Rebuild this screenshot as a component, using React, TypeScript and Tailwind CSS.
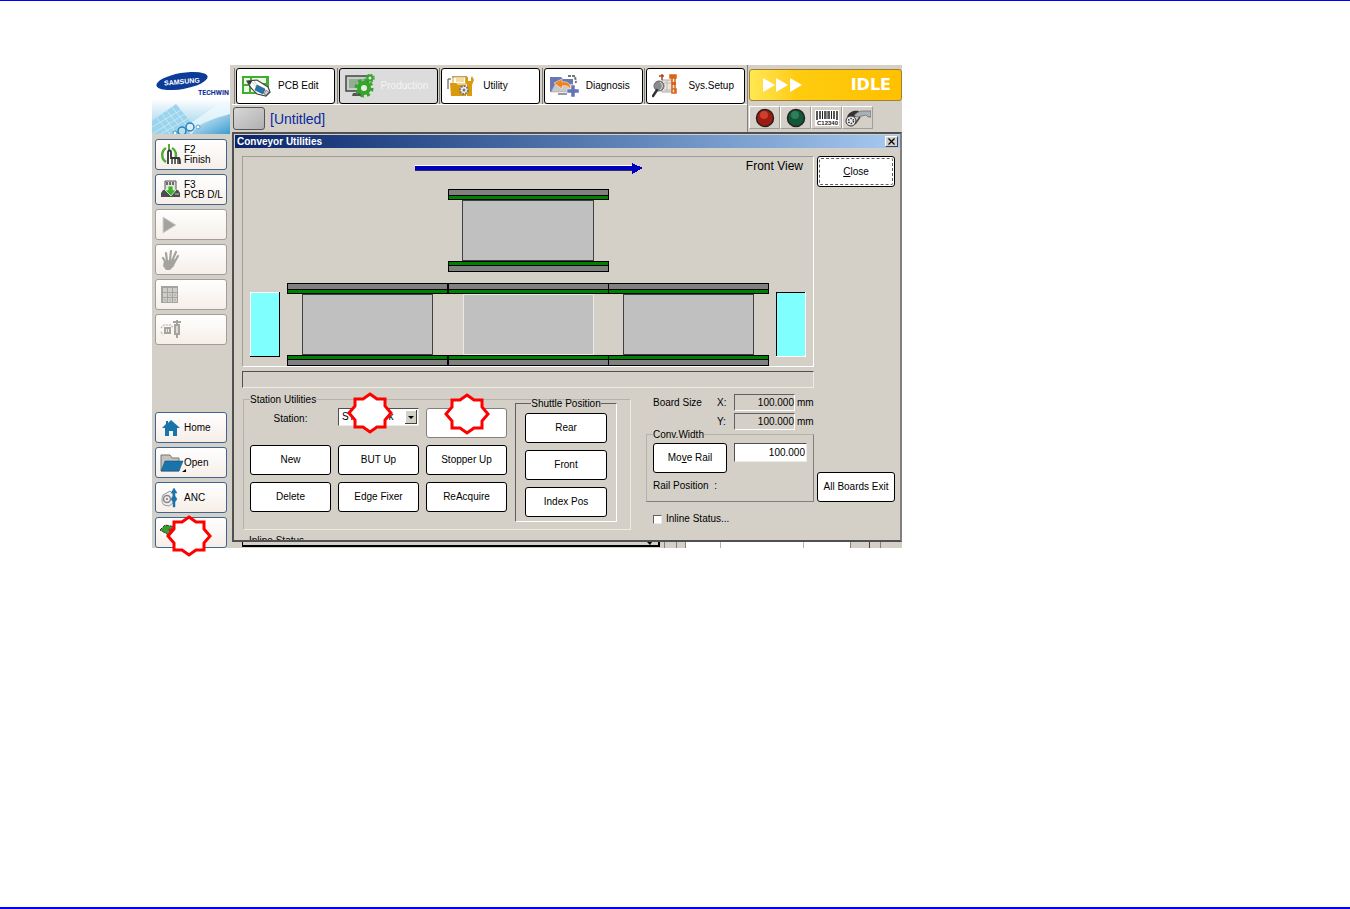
import React, { useState } from "react";

const navItems = [
  { label: "PCB Edit", icon: <PcbEditIcon />, active: false },
  { label: "Production", icon: <ProductionIcon />, active: true },
  { label: "Utility", icon: <UtilityIcon />, active: false },
  { label: "Diagnosis", icon: <DiagnosisIcon />, active: false },
  { label: "Sys.Setup", icon: <SetupIcon />, active: false },
];

function PcbEditIcon() {
  return (
    <svg width="30" height="24" viewBox="0 0 30 24">
      <rect x="0" y="2" width="27" height="18" fill="#43ad30" />
      <path d="M2 4h6v6H2zM10 4h14v5H10zM2 12h5v6H2zM22 11h3v7h-3zM9 15h6v3H9z" fill="#eef8e8" />
      <path d="M5 7l10-1 11 7 2 5-4 4-9-2-6-6z" fill="#fff" stroke="#444" strokeWidth="1.2" />
      <path d="M5 7l5 0-2 4z" fill="#333" />
      <path d="M10 8l4 5M12 7l3 4" stroke="#bbb" strokeWidth="0.8" />
      <path d="M15 11l8 4-2 5-8-4z" fill="#2474a8" stroke="#184c70" strokeWidth="0.6" />
      <path d="M24 16l3 2-3 3-2-1z" fill="#c8d0d4" stroke="#555" strokeWidth="0.6" />
    </svg>
  );
}

function ProductionIcon() {
  return (
    <svg width="30" height="24" viewBox="0 0 30 24">
      <path d="M1 2h22v15H1z" fill="#c8ccc6" stroke="#444" strokeWidth="1.5" />
      <path d="M4 5h16v9H4z" fill="#8fae94" />
      <path d="M8 19h9v3H7z" fill="#555" />
      <circle cx="19" cy="14" r="8" fill="none" stroke="#35a42c" strokeWidth="3" strokeDasharray="3.2 3.1" />
      <circle cx="19" cy="14" r="5" fill="#e6eee4" stroke="#35a42c" strokeWidth="4" />
      <circle cx="25" cy="4" r="4" fill="none" stroke="#35a42c" strokeWidth="1.5" strokeDasharray="1.6 1.6" />
      <circle cx="25" cy="4" r="2.5" fill="#e6eee4" stroke="#35a42c" strokeWidth="2" />
    </svg>
  );
}

function UtilityIcon() {
  return (
    <svg width="28" height="22" viewBox="0 0 28 22">
      <path d="M1 14V4h3M5 2h15v4" fill="none" stroke="#444" strokeWidth="1" />
      <path d="M6 2h13v7H6z" fill="#fff" stroke="#e0a020" />
      <path d="M9 4h8M9 6h8" stroke="#e8b850" />
      <path d="M3 8h6l2 2h8v11H4z" fill="#d99a0c" />
      <path d="M19 1l2 3v2h3V3l1-2 2 4-2 5v11h-5V10l-2-4z" fill="#d99a0c" />
      <circle cx="17" cy="15" r="4" fill="#f4f0e4" stroke="#777" strokeWidth="2" strokeDasharray="2 1" />
      <circle cx="17" cy="15" r="1.5" fill="#777" />
    </svg>
  );
}

function DiagnosisIcon() {
  return (
    <svg width="30" height="24" viewBox="0 0 30 24">
      <path d="M0 3h11l2 2h10v13H0z" fill="#6878b4" />
      <path d="M18 2h7l1 7" fill="none" stroke="#777" strokeWidth="2" strokeDasharray="3 1" />
      <path d="M5 10h18l-3 8H1z" fill="#c8c8cc" stroke="#999" strokeWidth="0.5" />
      <path d="M4 9l8-4v3c6-1 9 2 9 8-2-4-5-5-9-4v3z" fill="#f08418" stroke="#fff" strokeWidth="0.5" />
      <path d="M8 20h9" stroke="#999" strokeWidth="2" />
      <path d="M21 11h4v4h4v4h-4v4h-4v-4h-4v-4h4z" fill="#6474b4" stroke="#fff" strokeWidth="0.5" />
    </svg>
  );
}

function SetupIcon() {
  return (
    <svg width="28" height="26" viewBox="0 0 28 26">
      <path d="M10 7h10v12H10z" fill="#e8e4e0" stroke="#b8a898" />
      <path d="M12 10h8M12 17h8M15 7v12" stroke="#bbb" />
      <path d="M18 2h6v3h-6zM20 5h3v15h-3zM20 16h4v4h-4z" fill="#f8e8dc" stroke="#d86418" strokeWidth="1.5" />
      <path d="M18 2h6v3h-6zM20 9h4v3h-4z" fill="#d86418" />
      <path d="M10 1v6M7 3h5" stroke="#a04828" strokeWidth="1.5" />
      <circle cx="7" cy="13" r="5" fill="#8c8c8c" stroke="#666" />
      <path d="M8 9c3 2 3 6 0 8" stroke="#ddd" fill="none" />
      <path d="M5 17l-4 6" stroke="#333" strokeWidth="2.5" strokeLinecap="round" />
    </svg>
  );
}

function FinishIcon() {
  return (
    <svg width="24" height="22" viewBox="0 0 24 22">
      <path d="M6 4C1 7 1 15 6 18M12 4c4 2 5 7 3 11" fill="none" stroke="#55aa38" strokeWidth="2.500" />
      <path d="M9 0v8" stroke="#55aa38" strokeWidth="2" />
      <path d="M8 20V8c0-2 3-2 3 0v6h8c1 1 1 3 1 6" fill="#fff" stroke="#333" strokeWidth="1.800" />
      <path d="M12 14v6M15 14v6M18 15v5" stroke="#333" strokeWidth="1.500" />
    </svg>
  );
}

function PcbDownloadIcon() {
  return (
    <svg width="24" height="20" viewBox="0 0 24 20">
      <path d="M5 1h11v10H5z" fill="#e0e0dc" stroke="#555" />
      <path d="M7 2v3M10 2v3M13 2v3" stroke="#444" strokeWidth="1.500" />
      <path d="M3 10h15l2 3v4H1v-4z" fill="#4b4f4b" />
      <path d="M15 14h4" stroke="#ccc" />
      <path d="M8 6h5v4h3l-5 6-6-6h3z" fill="#3fae2c" stroke="#e8f8e0" strokeWidth="0.800" />
    </svg>
  );
}

function PlayIcon() {
  return (
    <svg width="24" height="20" viewBox="0 0 24 20">
      <path d="M3 2l13 8-13 8z" fill="#a5a39e" stroke="#d8d4ce" />
    </svg>
  );
}

function HandIcon() {
  return (
    <svg width="24" height="22" viewBox="0 0 24 22">
      <path d="M4 12l12-2-2 7-4 4H6l-3-4z" fill="#a5a39e" />
      <path d="M6 14L3 9M7 12L6 4M10 11l1-9M12 12l4-9M14 14l4-7" stroke="#a5a39e" strokeWidth="2.200" strokeLinecap="round" />
    </svg>
  );
}

function GridIcon() {
  return (
    <svg width="24" height="20" viewBox="0 0 24 20">
      <rect x="1" y="1" width="17" height="17" fill="#a5a39e" />
      <path d="M3 3h4v4H3zM8 3h4v4H8zM13 3h4v4h-4zM3 8h4v4H3zM8 8h4v4H8zM13 8h4v4h-4zM3 13h4v4H3zM8 13h4v4H8zM13 13h4v4h-4z" fill="#cfcdc8" />
      <path d="M9 10h2M14 10h2M4 15h2M9 15h2M14 15h2" stroke="#a5a39e" />
    </svg>
  );
}

function DispenseIcon() {
  return (
    <svg width="24" height="22" viewBox="0 0 24 22">
      <path d="M1 9l3-3h7l2 3M1 13l2 3" fill="none" stroke="#c4c2bd" strokeWidth="1.500" strokeDasharray="2 1" />
      <path d="M4 8h7v7H4z" fill="#a5a39e" />
      <path d="M6 10h1v3H6zM8 10h1v3H8z" fill="#eee" />
      <path d="M13 3h8M17 1v4M15 6h4v9h-4zM17 15v4" stroke="#a5a39e" strokeWidth="2" fill="#dcdad6" />
    </svg>
  );
}

function HomeIcon() {
  return (
    <svg width="24" height="20" viewBox="0 0 24 20">
      <path d="M11 2l9 8h-3v8h-4v-5H9v5H5v-8H2l4-4V3h2v2z" fill="#1a74ac" />
    </svg>
  );
}

function OpenIcon() {
  return (
    <svg width="27" height="20" viewBox="0 0 27 20">
      <path d="M1 2h9l2 3h7v13H1z" fill="#c4c2bd" stroke="#777" />
      <path d="M5 8h18l-4 10H1z" fill="#1a74ac" stroke="#135680" strokeWidth="0.600" />
      <path d="M26 16v3h-4z" fill="#000" />
    </svg>
  );
}

function AncIcon() {
  return (
    <svg width="24" height="22" viewBox="0 0 24 22">
      <path d="M3 8l7-4 3 3v9l-4 3-5-1c-3-3-2-7-1-10z" fill="#eee" stroke="#999" />
      <circle cx="7" cy="12" r="3.500" fill="none" stroke="#888" strokeWidth="1.500" />
      <circle cx="7" cy="12" r="1" fill="#777" />
      <path d="M14 1l3 5h-2v3l2 3-2 3v5h-2v-5l-2-3 2-3V6h-2z" fill="#1a74ac" stroke="#1a74ac" strokeWidth="0.500" />
    </svg>
  );
}

function BoardIcon() {
  return (
    <svg width="24" height="22" viewBox="0 0 24 22">
      <path d="M0 8l5-5 11 2 7 8-8 6-8-7z" fill="#3c9c30" stroke="#333" strokeDasharray="3 1" />
      <path d="M8 7l4-1 3 4-4 2z" fill="#b03020" />
    </svg>
  );
}

function SamsungLogo() {
  return (
    <div className="bg-white h-[69px] mr-[2px]">
      <svg className="block w-full" viewBox="0 0 78 69">
        <defs>
          <linearGradient id="sky" x1="0" y1="0" x2="0" y2="1">
            <stop offset="0" stopColor="#ffffff" />
            <stop offset="1" stopColor="#8ccbea" />
          </linearGradient>
          <linearGradient id="shade" x1="0" y1="0" x2="1" y2="1">
            <stop offset="0" stopColor="#e4f4fb" />
            <stop offset="1" stopColor="#3c9cd0" />
          </linearGradient>
        </defs>
        <path d="M0 34h78v35H0z" fill="url(#sky)" />
        <path d="M0 56l24-17 17 21-9 9H0z" fill="#9cd4ee" />
        <path d="M5 53l13 16M10 49l15 20M15 46l17 21M20 42l16 20M0 62l29-17M0 69l33-20M9 69l28-16" stroke="#d4eef8" strokeWidth="0.7" />
        <path d="M36 60l32-22 10-2v14L50 69H38z" fill="#f0f9fd" opacity="0.7" />
        <path d="M40 69c4-10 20-15 38-20v20z" fill="url(#shade)" />
        <circle cx="38" cy="62" r="4" fill="#d8eef8" stroke="#2884b8" strokeWidth="1.5" />
        <circle cx="30" cy="66" r="4" fill="#b8def0" stroke="#2884b8" strokeWidth="1.5" />
        <circle cx="23" cy="68" r="2" fill="#fff" stroke="#3c94c4" />
        <circle cx="46" cy="62" r="2" fill="#fff" stroke="#5ca4cc" />
        <ellipse cx="30" cy="16" rx="26" ry="8" transform="rotate(-10 30 16)" fill="#0c3c98" />
        <text x="12" y="19" transform="rotate(-5 30 16)" fill="#fff" fontSize="7" fontWeight="bold" fontFamily="Liberation Sans, sans-serif">SAMSUNG</text>
        <text x="46" y="30" fill="#0c2c90" fontSize="7" fontWeight="bold" fontFamily="Roboto, sans-serif">TECHWIN</text>
      </svg>
    </div>
  );
}

const SideButton: React.FC<{ icon: React.ReactNode; lines?: string[]; name: string; disabled?: boolean }> = ({ icon, lines = [], name, disabled }) => (
  <button
    aria-label={name}
    disabled={disabled}
    className={`flex items-center h-[31px] w-full shrink-0 rounded-[3px] border pl-1 text-left leading-[10px] bg-linear-to-b from-white to-[#f6eee8] ${
      disabled ? "border-[#a09e9a]" : "border-[#3c6690]"
    }`}
  >
    <span className="w-6 shrink-0">{icon}</span>
    <span className="whitespace-nowrap">
      {lines.map(l => (
        <span key={l} className="block">{l}</span>
      ))}
    </span>
  </button>
);

const PushButton: React.FC<{ children?: React.ReactNode; className?: string; label?: string }> = ({ children, className = "border-black", label }) => (
  <button aria-label={label} className={`h-[30px] rounded-[3px] border bg-white whitespace-nowrap text-center ${className}`}>
    {children}
  </button>
);

const Star: React.FC<{ className: string }> = ({ className }) => (
  <svg className={`absolute pointer-events-none ${className}`} width="48" height="46" viewBox="-24 -23 48 46">
    <path
      d="M0-19L7-14H15V-7L21 0L15 7V14H7L0 19L-7 14H-15V7L-21 0L-15-7V-14H-7Z"
      fill="#fff"
      stroke="#f00"
      strokeWidth="3"
    />
  </svg>
);

// Rail pair: green belt always faces the board
const Rail: React.FC<{ x: number; y: number; flip?: boolean }> = ({ x, y, flip }) => (
  <g stroke="#000">
    <rect x={x + 0.5} y={(flip ? y + 4 : y) + 0.5} width="160" height="6" fill="#808080" />
    <rect x={x + 0.5} y={(flip ? y : y + 6) + 0.5} width="160" height="4" fill="#008000" />
  </g>
);

const ConveyorView = () => (
  <svg className="block w-full" viewBox="0 0 570 209" shapeRendering="crispEdges">
    <path d="M172 9h218v5H172z" fill="#0000c0" />
    <path d="M389 6l11 5-11 6z" fill="#0000c0" />
    <path d="M172 8.500h217" stroke="#fff" />
    <path d="M172 13.500h217" stroke="#303060" />

    <Rail x={205} y={32} />
    <rect x="219.500" y="43.500" width="131" height="60" fill="#c0c0c0" stroke="#404040" />
    <Rail x={205} y={104} flip />

    {[44, 205, 365].map((x, i) => (
      <g key={x}>
        <Rail x={x} y={126} />
        <rect x={x + 15.5} y="137.500" width="130" height="60" fill="#c0c0c0" stroke={i === 1 ? "#e8e8e4" : "#404040"} />
        <Rail x={x} y={198} flip />
      </g>
    ))}

    <rect x="7" y="135" width="30" height="65" fill="#80ffff" />
    <path d="M36.500 135v64.500H7" stroke="#000" fill="none" />
    <path d="M7.500 199v-63.500H36" stroke="#fff" fill="none" />
    <rect x="533" y="135" width="30" height="65" fill="#80ffff" />
    <path d="M533.500 199v-63.500H562" stroke="#000" fill="none" />
    <path d="M562.500 135v64.500H533" stroke="#fff" fill="none" />
  </svg>
);

const Lamp: React.FC<{ color: string; shine: string }> = ({ color, shine }) => (
  <svg width="20" height="20" viewBox="0 0 20 20">
    <circle cx="10" cy="10" r="8.500" fill={color} stroke="#2a2020" strokeWidth="1.500" />
    <circle cx="9" cy="7" r="4" fill={shine} />
  </svg>
);

function BarcodeIcon() {
  return (
    <svg width="24" height="20" viewBox="0 0 24 20">
      <path d="M0 2h24v16H0z" fill="#fff" />
      <path d="M2 3v9M5 3v8M10 3v8M14 3v8M19 3v8M22 3v9" stroke="#222" strokeWidth="1.500" />
      <path d="M7.500 3v8M12 3v8M16.500 3v8" stroke="#222" />
      <text x="2" y="17" fontSize="6" fontWeight="bold" fontFamily="Liberation Sans, sans-serif" fill="#222">C12340</text>
    </svg>
  );
}

function FeederIcon() {
  return (
    <svg width="26" height="20" viewBox="0 0 26 20">
      <path d="M2 9C4 3 10 2 14 3l-3 6z" fill="#333" />
      <path d="M9 8c2-4 7-5 9-5h8v6h-3l-2-2-8 2z" fill="#a8b0b8" stroke="#666" strokeWidth="0.700" />
      <circle cx="6" cy="13" r="5" fill="#eee" stroke="#333" />
      <circle cx="6" cy="13" r="2.500" fill="none" stroke="#333" strokeWidth="1.500" strokeDasharray="1.500 1.200" />
      <path d="M10 16l5-7" stroke="#444" strokeWidth="1.500" />
    </svg>
  );
}

const statusIcons = [
  { name: "Stop lamp", icon: <Lamp color="#9c1c10" shine="#cc4030" /> },
  { name: "Run lamp", icon: <Lamp color="#125838" shine="#2c8058" /> },
  { name: "Barcode", icon: <BarcodeIcon /> },
  { name: "Feeder", icon: <FeederIcon /> },
];

const App: React.FC = () => {
  const [station, setStation] = useState("STN1");
  const [width, setWidth] = useState("100.000");
  const [inline, setInline] = useState(false);

  return (
    <div className="min-h-screen bg-white border-t border-b-2 border-t-[#00f] border-b-[#00f] pl-[152px] pt-16 font-['Liberation_Sans',Arial,sans-serif] text-[10px] leading-[12px] text-black">
      <div className="flex w-full max-w-[750px] bg-[#d4d0c8]">
        <aside className="w-20 shrink-0 flex flex-col">
          <SamsungLogo />
          <div className="flex flex-col gap-1 pl-[3px] pr-[5px] pt-[5px]">
            <SideButton name="Finish" icon={<FinishIcon />} lines={["F2", "Finish"]} />
            <SideButton name="PCB D/L" icon={<PcbDownloadIcon />} lines={["F3", "PCB D/L"]} />
            <SideButton name="Start" icon={<PlayIcon />} disabled />
            <SideButton name="Manual" icon={<HandIcon />} disabled />
            <SideButton name="Array" icon={<GridIcon />} disabled />
            <SideButton name="Dispense" icon={<DispenseIcon />} disabled />
          </div>
          <div className="relative mt-auto flex flex-col gap-1 pl-[3px] pr-[5px]">
            <SideButton name="Home" icon={<HomeIcon />} lines={["Home"]} />
            <SideButton name="Open" icon={<OpenIcon />} lines={["Open"]} />
            <SideButton name="ANC" icon={<AncIcon />} lines={["ANC"]} />
            <SideButton name="Conveyor" icon={<BoardIcon />} />
            <Star className="left-[13px] -bottom-[11px]" />
          </div>
        </aside>

        <div className="flex-1 min-w-0 flex flex-col">
          <header className="flex">
            <div className="flex-1 min-w-0">
              <nav className="flex pl-[2px] pt-[3px] h-10 border-b border-white">
                {navItems.map(n => (
                  <div key={n.label} className="flex-1 border-l border-[#808080]">
                    <button
                      className={`flex items-center w-[99px] h-9 ml-px rounded-[3px] border border-black pl-[5px] gap-[6px] whitespace-nowrap ${
                        n.active ? "bg-[#dcdcdc] text-[#f4f4f4]" : "bg-white"
                      }`}
                    >
                      <span className="w-[30px]">{n.icon}</span>
                      <span>{n.label}</span>
                    </button>
                  </div>
                ))}
              </nav>
              <div className="flex items-center gap-[5px] h-[27px] pl-px">
                <button aria-label="Program" className="w-8 h-[23px] rounded-[3px] border border-[#555] bg-linear-to-br from-[#d8d8d8] to-[#b0b0b0]" />
                <span className="text-[14px] leading-[20px] text-[#0828a0]">[Untitled]</span>
              </div>
            </div>
            <div className="w-[155px] shrink-0 border-l border-[#808080] pt-1 pl-px">
              <div className="flex items-center justify-between h-8 rounded-[3px] border border-[#a08030] bg-linear-to-r from-[#ffe850] via-[#ffcc10] via-30% to-[#ffc000] pl-3 pr-[10px]">
                <svg width="40" height="16" viewBox="0 0 40 16">
                  <path d="M1 1l12 7-12 7zM14 1l12 7-12 7zM28 1l12 7-12 7z" fill="#fff" />
                </svg>
                <span className="font-['DejaVu_Sans',sans-serif] font-bold text-[16px] leading-[20px] text-white">IDLE</span>
              </div>
              <div className="flex pt-[5px]">
                {statusIcons.map(s => (
                  <div key={s.name} title={s.name} className="flex items-center justify-center w-[31px] h-[23px] border border-l-white border-t-white border-r-[#a09e98] border-b-[#a09e98]">
                    {s.icon}
                  </div>
                ))}
              </div>
            </div>
          </header>

          <section className="border-2 border-t-[#505050] border-l-[#505050] border-r-[#808080] border-b-[#505050] pt-px pl-px">
            <div className="flex items-center justify-between h-[13px] pl-[2px] pr-[2px] bg-linear-to-r from-[#0a246a] to-[#a6caf0]">
              <h1 className="text-white font-bold leading-[13px]">Conveyor Utilities</h1>
              <button aria-label="Close window" className="flex items-center justify-center w-[13px] h-[11px] bg-[#d4d0c8] border border-t-white border-l-white border-r-[#404040] border-b-[#404040]">
                <svg width="7" height="7" viewBox="0 0 7 7">
                  <path d="M0.500 0.500l6 6M6.500 0.500l-6 6" stroke="#000" strokeWidth="1.200" />
                </svg>
              </button>
            </div>

            <div className="flex gap-[3px] pt-[8px] pl-[7px] pr-[5px]">
              <div className="flex-1 min-w-0">
                <div className="relative border border-[#a09e98] border-r-white border-b-white">
                  <ConveyorView />
                  <span className="absolute right-[10px] top-[2px] text-[12px] leading-[14px]">Front View</span>
                </div>
                <div className="mt-1 h-[17px] border border-t-[#505050] border-l-[#505050] border-r-[#ecebe6] border-b-[#ecebe6]" />

                <div className="flex justify-between pt-[6px]">
                  <fieldset className="flex gap-2 w-[388px] h-[136px] ml-px border border-[#b4b2ac] border-b-[#ecebe6] border-r-[#ecebe6] pl-[6px]">
                    <legend className="leading-[11px]">Station Utilities</legend>
                    <div className="grid grid-cols-[81px_81px_81px] auto-rows-[30px] gap-x-[7px] gap-y-[7px] pt-[3px] content-start">
                      <label htmlFor="station" className="text-center pt-[5px]">Station:</label>
                      <div className="relative">
                        <select
                          id="station"
                          value={station}
                          onChange={e => setStation(e.target.value)}
                          className="appearance-none block w-full h-[18px] bg-white border border-t-[#505050] border-l-[#505050] border-r-[#ecebe6] border-b-[#ecebe6] pl-[3px] leading-[14px] rounded-none"
                        >
                          <option value="STN1">STN1 Work</option>
                        </select>
                        <svg className="absolute right-[2px] top-[2px] pointer-events-none" width="12" height="14" viewBox="0 0 12 14">
                          <path d="M0 0h12v14H0z" fill="#404040" />
                          <path d="M0 0h11v13H0z" fill="#fff" />
                          <path d="M1 1h10v12H1z" fill="#d4d0c8" />
                          <path d="M3 6h6l-3 3z" fill="#000" />
                        </svg>
                        <Star className="left-[8px] -top-[18px]" />
                      </div>
                      <div className="relative">
                        <PushButton label="Station action" className="w-full border-[#808080]" />
                        <Star className="left-[17px] -top-[17px]" />
                      </div>
                      <PushButton>New</PushButton>
                      <PushButton>BUT Up</PushButton>
                      <PushButton>Stopper Up</PushButton>
                      <PushButton>Delete</PushButton>
                      <PushButton>Edge Fixer</PushButton>
                      <PushButton>ReAcquire</PushButton>
                    </div>
                    <fieldset className="w-[102px] h-[124px] -mt-[7px] border border-[#606060] border-r-white border-b-white px-[9px]">
                      <legend className="mx-auto leading-[11px] whitespace-nowrap">Shuttle Position</legend>
                      <div className="flex flex-col gap-[7px] pt-1">
                        <PushButton>Rear</PushButton>
                        <PushButton>Front</PushButton>
                        <PushButton>Index Pos</PushButton>
                      </div>
                    </fieldset>
                  </fieldset>

                  <div className="w-[168px]">
                    <div className="flex flex-col gap-[2px] pl-[7px]">
                      <div className="flex items-center">
                        <span className="w-16">Board Size</span>
                        <label htmlFor="size-x" className="w-[17px]">X:</label>
                        <input id="size-x" readOnly value="100.000" className="w-[61px] h-[17px] text-right border border-t-[#606060] border-l-[#606060] border-r-white border-b-white bg-[#d4d0c8]" />
                        <span className="pl-[2px]">mm</span>
                      </div>
                      <div className="flex items-center">
                        <span className="w-16" />
                        <label htmlFor="size-y" className="w-[17px]">Y:</label>
                        <input id="size-y" readOnly value="100.000" className="w-[61px] h-[17px] text-right border border-t-[#606060] border-l-[#606060] border-r-white border-b-white bg-[#d4d0c8]" />
                        <span className="pl-[2px]">mm</span>
                      </div>
                    </div>
                    <fieldset className="h-[72px] border border-[#808080] border-t-[#b4b2ac] border-l-[#b4b2ac] pl-[6px]">
                      <legend className="leading-[9px]">Conv.Width</legend>
                      <div className="flex gap-[7px] pt-1">
                        <PushButton className="w-[74px] border-black">
                          Mo<u>v</u>e Rail
                        </PushButton>
                        <input
                          aria-label="Conveyor width"
                          value={width}
                          onChange={e => setWidth(e.target.value)}
                          className="w-[73px] h-[19px] pr-px text-right bg-white border border-t-[#505050] border-l-[#505050] border-r-[#ecebe6] border-b-[#ecebe6]"
                        />
                      </div>
                      <div className="pt-[7px]">Rail Position &nbsp;:</div>
                    </fieldset>
                    <label className="flex items-center gap-1 pl-[7px] pt-[11px]">
                      <input
                        type="checkbox"
                        checked={inline}
                        onChange={e => setInline(e.target.checked)}
                        className="appearance-none w-[9px] h-[9px] bg-white border border-t-[#606060] border-l-[#606060] border-r-[#ecebe6] border-b-[#ecebe6] checked:bg-black"
                      />
                      Inline Status...
                    </label>
                  </div>
                </div>
                {/* next section starts here, cut by the dialog edge */}
                <div className="h-[5px] mt-[5px] pl-[7px] overflow-hidden">Inline Status</div>
              </div>

              <div className="flex flex-col justify-between w-[78px] pb-[38px]">
                <button className="h-[31px] p-px rounded-[3px] border border-black bg-white">
                  <span className="flex items-center justify-center h-full rounded-[2px] border border-dashed border-[#606060]">
                    <span><u>C</u>lose</span>
                  </span>
                </button>
                <PushButton>All Boards Exit</PushButton>
              </div>
            </div>
          </section>

          {/* window behind the dialog */}
          <div className="flex h-[6px] pl-[10px]">
            <div className="flex justify-end w-[418px] h-[5px] border-b-2 border-r-2 border-l border-black">
              <svg width="18" height="4" viewBox="0 0 18 4">
                <path d="M7 0h5l-2 3z" fill="#000" />
              </svg>
            </div>
            <div className="w-[5px] border-r border-[#808080]" />
            <div className="w-3 border-r border-[#808080]" />
            <div className="flex w-[166px] ml-2 bg-white border-x border-[#808080]">
              <div className="w-[35px] border-r border-[#b4b2ac]" />
              <div className="w-[83px] border-r border-[#b4b2ac]" />
            </div>
            <div className="w-[19px] border-r border-[#404040]" />
            <div className="w-[11px] border-r border-[#808080]" />
          </div>
        </div>
      </div>
    </div>
  );
};

export default App;
